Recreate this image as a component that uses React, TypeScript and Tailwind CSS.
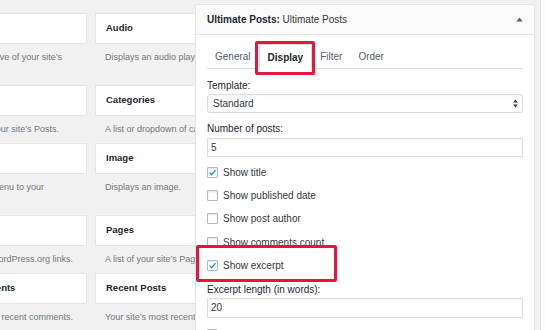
const leftWidgets = [
  { title: "Archives", lines: ["A monthly archive of your site’s", "Posts."], pr: "pr-[25px]" },
  { title: "Calendar", lines: ["A calendar of your site’s Posts."], pr: "pr-[28px]" },
  { title: "Custom Menu", lines: ["Add a custom menu to your", "sidebar."], pr: "pr-[43px]" },
  { title: "Meta", lines: ["Login, RSS, & WordPress.org links."], pr: "pr-[14px]" },
  { title: "Recent Comments", lines: ["Your site’s most recent comments."], pr: "pr-[14px]" },
];

const rightWidgets = [
  { title: "Audio", desc: "Displays an audio player." },
  { title: "Categories", desc: "A list or dropdown of categories." },
  { title: "Image", desc: "Displays an image." },
  { title: "Pages", desc: "A list of your site’s Pages." },
  { title: "Recent Posts", desc: "Your site’s most recent Posts." },
];

const options = [
  { label: "Show title", checked: true },
  { label: "Show published date", checked: false },
  { label: "Show post author", checked: false },
  { label: "Show comments count", checked: false },
  { label: "Show excerpt", checked: true },
];

function Card({ title, pad = "pl-[10px]" }: { title: string; pad?: string }) {
  return (
    <div className={`h-[31px] bg-white border border-[#e5e5e5] flex items-center ${pad} text-[9.5px] font-bold text-[#23282d] whitespace-nowrap`}>
      {title}
    </div>
  );
}

function Checkbox({ checked }: { checked: boolean }) {
  return (
    <span className="w-[11px] h-[11px] shrink-0 bg-white border border-[#b4b9be] rounded-[1px] shadow-[inset_0_1px_2px_rgba(0,0,0,0.1)] flex items-center justify-center">
      {checked && (
        <svg width="9" height="9" viewBox="0 0 9 9">
          <path d="M1.6 4.6l2 2.1 3.9-4.6" fill="none" stroke="#1e8cbe" strokeWidth="1.3" />
        </svg>
      )}
    </span>
  );
}

function CheckRow({ label, checked }: { label: string; checked: boolean }) {
  return (
    <div className="h-[23.3px] flex items-center gap-[5px] text-[10px] text-[#32373c] whitespace-nowrap">
      <Checkbox checked={checked} />
      <span>{label}</span>
    </div>
  );
}

export default function App() {
  return (
    <div className="relative w-[545px] h-[330px] overflow-hidden bg-[#f1f1f1] flex font-['Liberation_Sans',Arial,sans-serif]">
      {/* widget list */}
      <div className="w-[195px] shrink-0 overflow-hidden pt-[13px]">
        <div className="ml-[-87px] grid grid-cols-[174px_174px] gap-x-[8px] gap-y-[7px]">
          {leftWidgets.map((w, i) => [
            <div key={"l" + i}>
              <Card title={w.title} pad="pl-[18px]" />
              <div className={`mt-[6px] flex flex-col items-end ${w.pr} text-[9px] leading-[14px] text-[#72777c] whitespace-nowrap`}>
                <span>{w.lines[0]}</span>
                {w.lines[1] && <span className="self-start pl-[10px]">{w.lines[1]}</span>}
              </div>
            </div>,
            <div key={"r" + i}>
              <Card title={rightWidgets[i].title} />
              <div className="mt-[6px] pl-[10px] text-[9px] leading-[14px] text-[#72777c] whitespace-nowrap">
                {rightWidgets[i].desc}
              </div>
            </div>,
          ])}
        </div>
      </div>

      {/* sidebar widget panel */}
      <div className="w-[340px] shrink-0 mt-[4px] h-[340px] bg-white border border-[#e5e5e5] shadow-[0_1px_1px_rgba(0,0,0,0.04)]">
        <div className="h-[30px] bg-[#fafafa] border-b border-[#e5e5e5] flex items-center justify-between px-[11px] text-[10px] text-[#23282d]">
          <span>
            <b>Ultimate Posts:</b> <span className="text-[#32373c]">Ultimate Posts</span>
          </span>
          <svg width="7" height="5" viewBox="0 0 7 5">
            <path d="M3.5 0.5L6.5 4.5H0.5Z" fill="#555d66" />
          </svg>
        </div>

        <div className="px-[11px]">
          <div className="mt-[9px] flex items-end border-b border-[#dddddd] text-[10px]">
            <div className="h-[24px] px-[8px] flex items-center text-[#555d66]">General</div>
            <div className="h-[25px] -mb-px px-[8px] flex items-center bg-white border border-b-0 border-[#dddddd] font-bold text-[#23282d]">
              Display
            </div>
            <div className="h-[24px] px-[8px] flex items-center text-[#555d66]">Filter</div>
            <div className="h-[24px] px-[8px] flex items-center text-[#555d66]">Order</div>
          </div>

          <div className="mt-[10px] text-[10px] leading-[14px] text-[#23282d]">Template:</div>
          <div className="mt-[1px] h-[19px] border border-[#dddddd] rounded-[3px] shadow-[inset_0_1px_2px_rgba(0,0,0,0.05)] flex items-center justify-between pl-[5px] pr-[4px] text-[10px] text-[#32373c]">
            <span>Standard</span>
            <svg width="5" height="9" viewBox="0 0 5 9">
              <path d="M2.5 0.5L4.8 3.6H0.2Z M0.2 5.4H4.8L2.5 8.5Z" fill="#32373c" />
            </svg>
          </div>

          <div className="mt-[9px] text-[10px] leading-[14px] text-[#23282d]">Number of posts:</div>
          <div className="mt-[2px] h-[19px] border border-[#dddddd] shadow-[inset_0_1px_2px_rgba(0,0,0,0.05)] flex items-center pl-[3px] text-[10px] text-[#32373c]">
            5
          </div>

          <div className="mt-[3.5px]">
            {options.map((o) => (
              <CheckRow key={o.label} label={o.label} checked={o.checked} />
            ))}
          </div>

          <div className="mt-[6px] text-[10px] leading-[14px] text-[#23282d]">Excerpt length (in words):</div>
          <div className="mt-[1px] h-[20px] border border-[#dddddd] shadow-[inset_0_1px_2px_rgba(0,0,0,0.05)] flex items-center pl-[3px] text-[10px] text-[#32373c]">
            20
          </div>

          <div className="mt-[4.5px]">
            <CheckRow label="Show content" checked={false} />
          </div>
        </div>
      </div>

      {/* next sidebar edge */}
      <div className="ml-[5px] flex-1 border-l border-[#e5e5e5] bg-[#fafafa]" />

      {/* red highlight annotations */}
      <div className="absolute left-[255px] top-[41px] w-[60px] h-[34px] border-[3px] border-[#e3173e] rounded-[2px]" />
      <div className="absolute left-[196px] top-[245px] w-[141px] h-[37px] border-[3px] border-[#e3173e] rounded-[2px]" />
    </div>
  );
}
